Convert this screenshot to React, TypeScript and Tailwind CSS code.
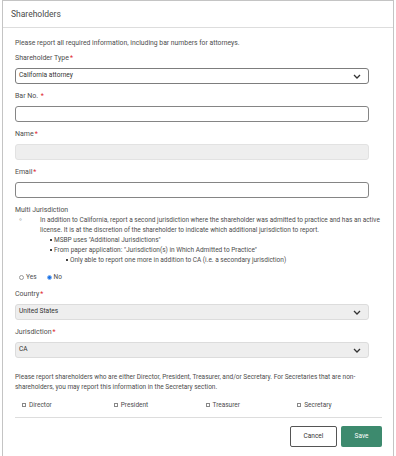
import React from "react"

const Req = () => <span className="text-[#e0262b] ml-[1px]">*</span>

function Chevron() {
  return (
    <svg width="8" height="5" viewBox="0 0 8 5" className="shrink-0">
      <path d="M1 1 L4 4 L7 1" fill="none" stroke="#333" strokeWidth="1.3" />
    </svg>
  )
}

function Label({ children }: { children: React.ReactNode }) {
  return (
    <div className="h-[10px] leading-[10px] text-[7px] text-[#4d4d4d]">
      {children}
      <Req />
    </div>
  )
}

function Select({ value, disabled = false }: { value: string; disabled?: boolean }) {
  return (
    <div
      className={`mt-[5px] h-[16px] w-[354px] rounded-[3px] border flex items-center justify-between pl-[3px] pr-[7px] text-[6.6px] text-[#333] ${
        disabled ? "bg-[#eeeeee] border-[#dcdcdc]" : "bg-white border-[#7d7d7d]"
      }`}
    >
      <span>{value}</span>
      <Chevron />
    </div>
  )
}

function Input({ disabled = false }: { disabled?: boolean }) {
  return (
    <div
      className={`mt-[5px] h-[16px] w-[354px] rounded-[3px] border ${
        disabled ? "bg-[#eeeeee] border-[#e2e2e2]" : "bg-white border-[#858585]"
      }`}
    />
  )
}

function Square() {
  return (
    <span className="inline-block w-[4px] align-middle">
      <span className="block w-[2px] h-[2px] bg-[#444]" />
    </span>
  )
}

export default function App() {
  const roles = ["Director", "President", "Treasurer", "Secretary"]

  return (
    <div className="w-[396px] h-[456px] bg-white overflow-hidden font-['Roboto',sans-serif]">
      <div className="ml-[2px] w-[392px] h-full border-l border-r border-t border-[#c4c4c4]">
        {/* Header */}
        <div className="h-[27px] border-b border-[#dddddd] pl-[8px] flex items-center text-[8.5px] text-[#4a4a4a]">
          Shareholders
        </div>

        {/* Body */}
        <div className="pl-[12px] pr-[11px] pt-[10px]">
          <div className="h-[10px] leading-[10px] text-[6.8px] text-[#4d4d4d]">
            Please report all required information, including bar numbers for attorneys.
          </div>

          <div className="mt-[5px]">
            <Label>Shareholder Type</Label>
            <Select value="California attorney" />
          </div>

          <div className="mt-[7px]">
            <Label>Bar No. </Label>
            <Input />
          </div>

          <div className="mt-[7px]">
            <Label>Name</Label>
            <Input disabled />
          </div>

          <div className="mt-[7px]">
            <Label>Email</Label>
            <Input />
          </div>

          {/* Multi Jurisdiction */}
          <div className="mt-[7px] text-[6.5px] text-[#4d4d4d] leading-[10px] whitespace-nowrap">
            <div className="h-[10px] text-[6.9px]">Multi Jurisdiction</div>
            <div className="flex h-[10px]">
              <span className="w-[25px] pl-[4px] text-[8px] text-[#666]">◦</span>
              <span>In addition to California, report a second jurisdiction where the shareholder was admitted to practice and has an active</span>
            </div>
            <div className="pl-[25px]">
              license. It is at the discretion of the shareholder to indicate which additional jurisdiction to report.
            </div>
            <div className="pl-[35px]">
              <Square />
              MSBP uses "Additional Jurisdictions"
            </div>
            <div className="pl-[35px]">
              <Square />
              From paper application: "Jurisdiction(s) in Which Admitted to Practice"
            </div>
            <div className="pl-[51px]">
              <Square />
              Only able to report one more in addition to CA (i.e. a secondary jurisdiction)
            </div>
          </div>

          {/* Radios */}
          <div className="mt-[7px] h-[10px] leading-[10px] pl-[4px] text-[6.5px] text-[#4d4d4d] whitespace-nowrap">
            <span className="inline-block align-middle w-[5px] h-[5px] rounded-full border border-[#999] bg-white" />
            <span className="ml-[2px]">Yes</span>
            <span className="inline-block align-middle ml-[10px] w-[5px] h-[5px] rounded-full bg-[#1a73e8] border border-[#8bb6f0]" />
            <span className="ml-[2px]">No</span>
          </div>

          <div className="mt-[7px]">
            <Label>Country</Label>
            <Select value="United States" disabled />
          </div>

          <div className="mt-[7px]">
            <Label>Jurisdiction</Label>
            <Select value="CA" disabled />
          </div>

          {/* Officer roles */}
          <div className="mt-[14px] text-[6.5px] text-[#4d4d4d] leading-[10px] whitespace-nowrap">
            <div>Please report shareholders who are either Director, President, Treasurer, and/or Secretary. For Secretaries that are non-</div>
            <div>shareholders, you may report this information in the Secretary section.</div>
          </div>

          <div className="mt-[8px] h-[10px] grid grid-cols-4 text-[6.5px] text-[#4d4d4d] leading-[10px]">
            {roles.map((r) => (
              <label key={r} className="pl-[7px] whitespace-nowrap">
                <span className="inline-block align-middle w-[4px] h-[4px] border border-[#888] bg-white" />
                <span className="ml-[3px]">{r}</span>
              </label>
            ))}
          </div>

          <div className="mt-[7px] border-t border-[#dddddd]" />

          <div className="mt-[8px] flex justify-end gap-[4px]">
            <button className="w-[47px] h-[21px] rounded-[2px] border border-[#555] bg-white text-[6.5px] text-[#333]">
              Cancel
            </button>
            <button className="w-[41px] h-[21px] rounded-[2px] bg-[#3d8a6e] text-[6.5px] text-white">
              Save
            </button>
          </div>
        </div>
      </div>
    </div>
  )
}
